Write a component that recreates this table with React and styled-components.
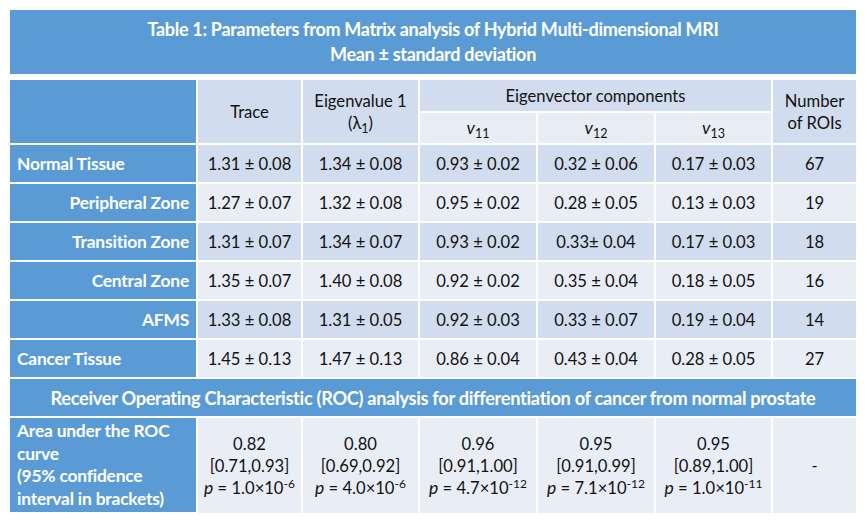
import React from "react";
import styled, { createGlobalStyle } from "styled-components";

const Global = createGlobalStyle`
  body {
    margin: 0;
    background: #ffffff;
    font-family: Lato, "Open Sans", sans-serif;
  }
`;

const Page = styled.div`
  padding: 10px 11px 10px 10px;
  width: 846px;
`;

const Title = styled.div`
  background: #5b9bd5;
  color: #ffffff;
  font-weight: bold;
  font-size: 18px;
  line-height: 25px;
  text-align: center;
  height: 64px;
  display: flex;
  flex-direction: column;
  justify-content: center;
  margin-bottom: 4px;
  letter-spacing: -0.3px;
`;

const Table = styled.table`
  width: 846px;
  table-layout: fixed;
  border-collapse: collapse;
  font-size: 16.6px;
  color: #111111;
`;

const Cell = styled.td`
  border: 2px solid #ffffff;
  padding: 0;
  height: ${(p) => p.$h || 37}px;
  text-align: center;
  vertical-align: middle;
  background: ${(p) => (p.$dark ? "#d1dcee" : "#e9edf6")};
  line-height: 22px;
  white-space: nowrap;
  tr > &:first-child {
    border-left: none;
  }
  tr > &:last-child {
    border-right: none;
  }
`;

const Label = styled.th`
  border: 2px solid #ffffff;
  border-left: none;
  background: #5b9bd5;
  color: #ffffff;
  font-weight: bold;
  font-size: 17.4px;
  text-align: ${(p) => (p.$indent ? "right" : "left")};
  padding: ${(p) => (p.$indent ? "0 7px 0 0" : "0 0 0 7px")};
  height: ${(p) => p.$h || 37}px;
  line-height: ${(p) => p.$lh || 22}px;
  vertical-align: middle;
  letter-spacing: -0.2px;
  white-space: nowrap;
`;

const Band = styled.th`
  background: #5b9bd5;
  color: #ffffff;
  font-weight: bold;
  font-size: 18.2px;
  height: 35px;
  border: 2px solid #ffffff;
  border-left: none;
  border-right: none;
  letter-spacing: -0.3px;
  white-space: nowrap;
`;

const V = styled.i`
  font-family: Lato, sans-serif;
  font-size: 17.5px;
`;

const Sub = styled.sub`
  font-size: 12.5px;
  vertical-align: -4px;
  line-height: 0;
`;

const Sup = styled.sup`
  font-size: 12px;
  vertical-align: 6px;
  line-height: 0;
`;

const rows = [
  ["Normal Tissue", false, "1.31 ± 0.08", "1.34 ± 0.08", "0.93 ± 0.02", "0.32 ± 0.06", "0.17 ± 0.03", "67"],
  ["Peripheral Zone", true, "1.27 ± 0.07", "1.32 ± 0.08", "0.95 ± 0.02", "0.28 ± 0.05", "0.13 ± 0.03", "19"],
  ["Transition Zone", true, "1.31 ± 0.07", "1.34 ± 0.07", "0.93 ± 0.02", "0.33± 0.04", "0.17 ± 0.03", "18"],
  ["Central Zone", true, "1.35 ± 0.07", "1.40 ± 0.08", "0.92 ± 0.02", "0.35 ± 0.04", "0.18 ± 0.05", "16"],
  ["AFMS", true, "1.33 ± 0.08", "1.31 ± 0.05", "0.92 ± 0.03", "0.33 ± 0.07", "0.19 ± 0.04", "14"],
  ["Cancer Tissue", false, "1.45 ± 0.13", "1.47 ± 0.13", "0.86 ± 0.04", "0.43 ± 0.04", "0.28 ± 0.05", "27"],
];

const roc = [
  ["0.82", "[0.71,0.93]", "1.0", "-6"],
  ["0.80", "[0.69,0.92]", "4.0", "-6"],
  ["0.96", "[0.91,1.00]", "4.7", "-12"],
  ["0.95", "[0.91,0.99]", "7.1", "-12"],
  ["0.95", "[0.89,1.00]", "1.0", "-11"],
];

export default function App() {
  return (
    <Page>
      <Global />
      <Title>
        <div>Table 1: Parameters from Matrix analysis of Hybrid Multi-dimensional MRI</div>
        <div>Mean ± standard deviation</div>
      </Title>
      <Table>
        <colgroup>
          <col style={{ width: 187 }} />
          <col style={{ width: 105 }} />
          <col style={{ width: 117 }} />
          <col style={{ width: 118 }} />
          <col style={{ width: 118 }} />
          <col style={{ width: 117 }} />
          <col style={{ width: 84 }} />
        </colgroup>
        <tbody>
          <tr>
            <Label rowSpan={2} />
            <Cell rowSpan={2} $dark>Trace</Cell>
            <Cell rowSpan={2} $dark>
              Eigenvalue 1
              <br />
              (λ<Sub>1</Sub>)
            </Cell>
            <Cell colSpan={3} $dark $h={31}>Eigenvector components</Cell>
            <Cell rowSpan={2} $dark>
              Number
              <br />
              of ROIs
            </Cell>
          </tr>
          <tr>
            <Cell $h={30}><V>v</V><Sub>11</Sub></Cell>
            <Cell $h={30}><V>v</V><Sub>12</Sub></Cell>
            <Cell $h={30}><V>v</V><Sub>13</Sub></Cell>
          </tr>
          {rows.map(([name, indent, ...vals], i) => (
            <tr key={name}>
              <Label $indent={indent}>{name}</Label>
              {vals.map((v, j) => (
                <Cell key={j} $dark={i % 2 === 0}>{v}</Cell>
              ))}
            </tr>
          ))}
          <tr>
            <Band colSpan={7}>
              Receiver Operating Characteristic (ROC) analysis for differentiation of cancer from normal prostate
            </Band>
          </tr>
          <tr>
            <Label $h={94} $lh={22.5}>
              Area under the ROC
              <br />
              curve
              <br />
              (95% confidence
              <br />
              interval in brackets)
            </Label>
            {roc.map(([a, ci, p, e]) => (
              <Cell key={ci + p} $h={94} style={{ lineHeight: "22px", borderBottom: "none" }}>
                {a}
                <br />
                {ci}
                <br />
                <V>p</V> = {p}×10<Sup>{e}</Sup>
              </Cell>
            ))}
            <Cell $h={94} style={{ borderBottom: "none" }}>-</Cell>
          </tr>
        </tbody>
      </Table>
    </Page>
  );
}
